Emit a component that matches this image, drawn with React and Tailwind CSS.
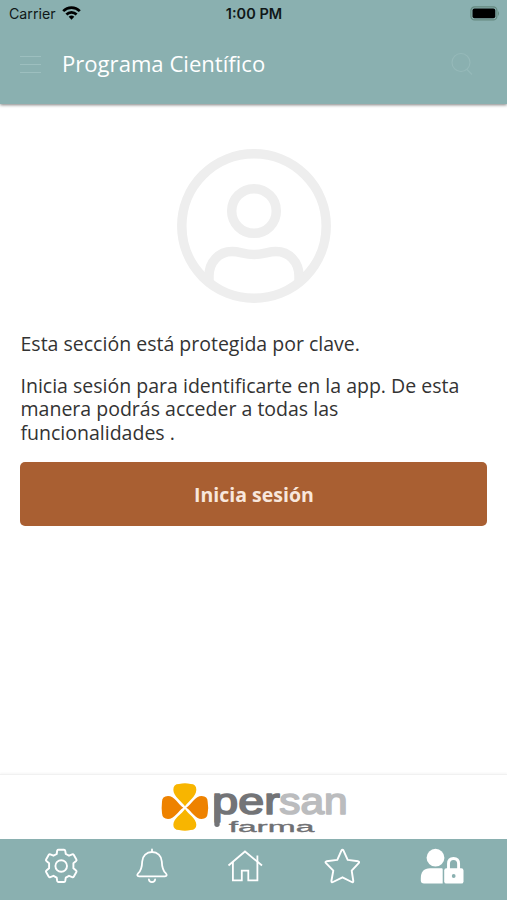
const TABS = [
  { id: "settings", label: "Ajustes", Icon: GearIcon, spacing: "ml-[43px] w-9" },
  { id: "alerts", label: "Avisos", Icon: BellIcon, spacing: "ml-[55px] w-9" },
  { id: "home", label: "Inicio", Icon: HomeIcon, spacing: "ml-[57px] w-9" },
  { id: "favorites", label: "Favoritos", Icon: StarIcon, spacing: "ml-[61px] w-9" },
  { id: "account", label: "Cuenta", Icon: UserLockIcon, spacing: "ml-[60px] w-[45px]" },
];

export default function App() {
  return (
    <div className="flex h-[900px] w-[507px] flex-col overflow-hidden bg-white font-['Open_Sans',sans-serif] text-[#333333]">
      {/* Header */}
      <header className="z-10 h-[104px] shrink-0 bg-[#8ab0b0] shadow-[0_1px_3px_rgba(0,0,0,0.5)]">
        <StatusBar />
        <div className="flex h-[73px] items-center pl-5 pr-[33px]">
          <button aria-label="Menú" className="mt-px flex h-[17px] w-[21px] flex-col justify-between">
            <span className="h-px w-full bg-[#9dbfbf]" />
            <span className="h-px w-full bg-[#9dbfbf]" />
            <span className="h-px w-full bg-[#9dbfbf]" />
          </button>
          <h1 className="-mt-px ml-[21px] whitespace-nowrap text-[22.1px] leading-7 text-white">Programa Científico</h1>
          <svg className="ml-auto h-6 w-6" viewBox="0 0 24 24" fill="none" stroke="#96b9b9" strokeWidth="1.1">
            <circle cx="11" cy="10.5" r="9" />
            <path d="M17 17.5l5 5" />
          </svg>
        </div>
      </header>

      {/* Protected section */}
      <main className="flex flex-1 flex-col px-5 pt-[45px]">
        <AvatarIcon />
        <p className="mt-[28.5px] whitespace-nowrap pl-[0.5px] text-[19.52px] leading-[23.3px]">
          Esta sección está protegida por clave.
        </p>
        <p className="mt-[19.2px] whitespace-nowrap pl-[0.5px] text-[19.52px] leading-[23.3px]">
          Inicia sesión para identificarte en la app. De esta
          <br />
          manera podrás acceder a todas las
          <br />
          funcionalidades .
        </p>
        <button className="ml-[0.4px] mt-[18.6px] h-[63.5px] w-full rounded-[5px] bg-[#a95f32] pt-px text-[19.5px] font-bold text-[#f8e7dc]">
          Inicia sesión
        </button>
      </main>

      {/* Sponsor */}
      <section className="flex h-[65px] shrink-0 justify-center border-t border-[#f1f1f1] bg-white pl-[2px] shadow-[0_-1px_2px_rgba(0,0,0,0.04)]">
        <SponsorLogo />
      </section>

      {/* Tab bar */}
      <nav className="flex h-[61px] shrink-0 bg-[#8ab0b0] pt-[9px]">
        {TABS.map(({ id, label, Icon, spacing }) => (
          <button key={id} aria-label={label} className={`h-9 shrink-0 ${spacing}`}>
            <Icon />
          </button>
        ))}
      </nav>
    </div>
  );
}

function StatusBar() {
  return (
    <div className="grid h-[27px] grid-cols-3 items-center pl-[9px] pr-[7px] font-[Inter,sans-serif] text-[14.2px] leading-4 text-[#101818]">
      <div className="flex items-center gap-[6px]">
        <span>Carrier</span>
        <svg className="-mt-[2px] h-[14px] w-[19px]" viewBox="0 0 19 14" fill="none" stroke="#000" strokeWidth="2.7">
          <path d="M1.2 5.1a11.8 11.8 0 0 1 16.6 0" />
          <path d="M4.4 8.5a7.2 7.2 0 0 1 10.2 0" />
          <path d="M9.5 13.7L6.7 10.8a4 4 0 0 1 5.6 0z" fill="#000" stroke="none" />
        </svg>
      </div>
      <span className="pr-px text-center text-[14.5px] font-semibold">1:00 PM</span>
      <svg className="ml-auto h-[15px] w-[30px]" viewBox="0 0 30 15">
        <rect x="0.9" y="0.9" width="26" height="13" rx="3.7" fill="none" stroke="#64887f" strokeWidth="1.2" />
        <rect x="2.5" y="2.5" width="22.8" height="9.8" rx="2" />
        <path d="M28 5q2 2.5 0 5z" fill="#64887f" />
      </svg>
    </div>
  );
}

function AvatarIcon() {
  return (
    <svg className="h-[154px] w-[154px] shrink-0 self-center" viewBox="0 0 154 154" fill="none" stroke="#eeeeee" strokeWidth="9.5">
      <circle cx="77" cy="77" r="72.2" />
      <circle cx="77" cy="62" r="22.3" />
      <path d="M32 133V127C32 113 42 102.5 55 102.5C63 102.5 67 105.5 77 105.5C87 105.5 91 102.5 99 102.5C112 102.5 122 113 122 127V133" />
    </svg>
  );
}

function SponsorLogo() {
  return (
    <svg className="h-[64px] w-[210px]" viewBox="0 0 630 192" aria-label="persan farma">
      {/* clover petals */}
      <path d="M105 94C96 79 70 64 70 44Q70 27 87 27Q105 23 122 27Q139 27 139 44C139 64 114 79 105 94Z" fill="#f8b500" />
      <path d="M105 102C96 117 70 130 70 149Q70 164 87 165Q105 169 122 165Q139 164 139 149C139 130 114 117 105 102Z" fill="#f8b500" />
      <path d="M100 98C85 88 73 63 54 63Q36 64 36 80Q34 98 36 115Q37 132 54 132C73 132 85 107 100 98Z" fill="#ee8200" />
      <path d="M109 98C124 88 136 63 155 63Q173 64 173 80Q176 98 173 115Q172 132 155 132C136 132 124 107 109 98Z" fill="#ee8200" />
      <g fontFamily="Liberation Sans, sans-serif" strokeLinejoin="round">
        <text x="187" y="117" fontSize="112" fill="#737477" stroke="#737477" strokeWidth="5" textLength="202" lengthAdjust="spacingAndGlyphs">per</text>
        <text x="388" y="117" fontSize="112" fill="#bbbcbe" stroke="#bbbcbe" strokeWidth="5" textLength="205" lengthAdjust="spacingAndGlyphs">san</text>
        <text x="236" y="170" fontSize="43" fill="#6f7073" stroke="#6f7073" strokeWidth="1" textLength="257" lengthAdjust="spacingAndGlyphs">farma</text>
      </g>
      {/* the mark's long rounded stem */}
      <path d="M201 66V148" stroke="#737477" strokeWidth="16" strokeLinecap="round" />
    </svg>
  );
}

function GearIcon() {
  return (
    <svg className="h-9 w-9" viewBox="0 0 36 36" fill="none" stroke="#fff" strokeWidth="1.9" strokeLinejoin="round">
      <path d="M14.2 2.5Q14.5 1.8 15.5 1.8H21Q22 1.8 22.2 2.7L22.8 6L26 7.7L29.2 6.3Q30.2 6 30.7 6.8L33.4 11.5Q33.9 12.4 33.1 13L30.4 15.2V20.2L33.1 22.5Q33.9 23.1 33.4 24L30.7 28.7Q30.2 29.5 29.2 29.1L26 27.8L22.8 29.6L22.2 33Q22 34 21 34H15.5Q14.5 34 14.2 33L13.7 29.6L10.5 27.8L7.3 29.1Q6.4 29.5 5.8 28.7L3.1 24Q2.6 23.1 3.4 22.5L6.1 20.2V15.2L3.4 13Q2.6 12.4 3.1 11.5L5.8 6.8Q6.3 6 7.3 6.3L10.5 7.7L13.7 6Z" />
      <circle cx="18.2" cy="18" r="5.8" />
    </svg>
  );
}

function BellIcon() {
  return (
    <svg className="h-9 w-9" viewBox="0 0 36 36" fill="none" stroke="#fff" strokeWidth="1.8" strokeLinecap="round" strokeLinejoin="round">
      <path d="M18 1.5V4M18 4C12.5 4 8.5 8 8.2 13.5C8 19.5 7.3 22.5 4.3 25.2C2.5 27 3.4 28.3 5 28.3H31C32.6 28.3 33.5 27 31.7 25.2C28.7 22.5 28 19.5 27.8 13.5C27.5 8 23.5 4 18 4Z" />
      <path d="M14.9 31.5C15.2 35 20.8 35 21.1 31.5" />
    </svg>
  );
}

function HomeIcon() {
  return (
    <svg className="h-9 w-9" viewBox="0 0 36 36" fill="none" stroke="#fff" strokeWidth="1.8">
      <path d="M1.5 17.5L18 3.5L35 17.5" />
      <path d="M5.9 14V32.3H14.8V22.7H21.3V32.3H30.4V14M30.4 14V7.5" />
    </svg>
  );
}

function StarIcon() {
  return (
    <svg className="h-9 w-9" viewBox="0 0 36 36" fill="none" stroke="#fff" strokeWidth="1.9" strokeLinejoin="round">
      <path d="M17.4 2.6Q18.5 .9 19.5 2.6L23.7 11.9L34.2 13.3Q35.9 13.8 34.7 15.1L27.7 22.6L29.3 33Q29.3 34.8 27.7 34L18.5 29.3L9 34Q7.4 34.8 7.4 33L9.3 22.6L2 15.1Q.8 13.8 2.5 13.3L13.3 11.9Z" />
    </svg>
  );
}

function UserLockIcon() {
  return (
    <svg className="h-9 w-[45px]" viewBox="0 0 45 36" fill="#fff">
      <circle cx="15.5" cy="9.7" r="8.9" />
      <path d="M10 20.3H21.7Q22.7 20.3 22.7 21.5V35.5H4Q.8 35.5 .8 32.2V30C.8 24 4 20.3 10 20.3Z" />
      <path d="M28.5 21V15.8Q28.5 10.5 33.5 10.5Q38.6 10.5 38.6 15.8V21" fill="none" stroke="#fff" strokeWidth="2.9" />
      <rect x="24.2" y="20.3" width="19.3" height="15.3" rx="2.2" />
      <circle cx="33.7" cy="28" r="1.9" fill="#8ab0b0" />
    </svg>
  );
}
